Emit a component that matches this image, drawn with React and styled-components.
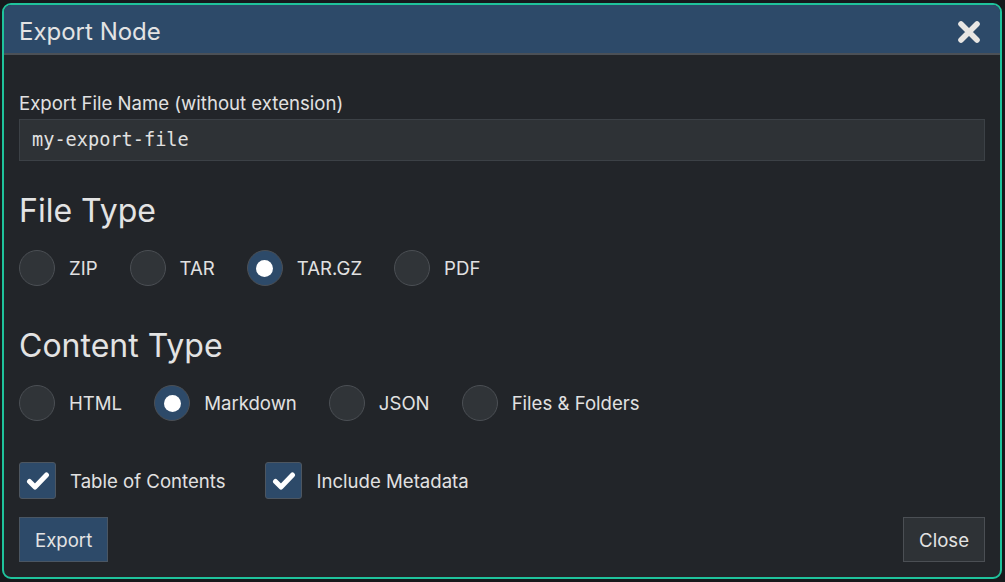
import React, { useState } from "react";
import styled, { createGlobalStyle } from "styled-components";

const GlobalStyle = createGlobalStyle`
  html, body {
    margin: 0;
    padding: 0;
    background: #16191c;
    font-family: Inter, "Noto Sans", sans-serif;
  }
  * { box-sizing: border-box; }
`;

const fileTypes = ["ZIP", "TAR", "TAR.GZ", "PDF"];
const contentTypes = ["HTML", "Markdown", "JSON", "Files & Folders"];

export default function App() {
  const [fileType, setFileType] = useState("TAR.GZ");
  const [contentType, setContentType] = useState("Markdown");
  const [toc, setToc] = useState(true);
  const [meta, setMeta] = useState(true);

  return (
    <>
      <GlobalStyle />
      <Page>
        <Dialog>
          <Header>
            <Title>Export Node</Title>
            <CloseIcon aria-label="close">
              <svg width="24" height="24" viewBox="0 0 24 24">
                <path
                  d="M4 4 L20 20 M20 4 L4 20"
                  stroke="#e8e6e3"
                  strokeWidth="5.6"
                  strokeLinecap="round"
                  fill="none"
                />
              </svg>
            </CloseIcon>
          </Header>
          <Body>
            <Label>Export File Name (without extension)</Label>
            <TextInput defaultValue="my-export-file" spellCheck={false} />

            <Heading>File Type</Heading>
            <OptionRow>
              {fileTypes.map((t) => (
                <Option key={t} onClick={() => setFileType(t)}>
                  <Radio $checked={fileType === t} />
                  <OptionLabel>{t}</OptionLabel>
                </Option>
              ))}
            </OptionRow>

            <Heading $gap={42}>Content Type</Heading>
            <OptionRow>
              {contentTypes.map((t) => (
                <Option key={t} onClick={() => setContentType(t)}>
                  <Radio $checked={contentType === t} />
                  <OptionLabel>{t}</OptionLabel>
                </Option>
              ))}
            </OptionRow>

            <CheckRow>
              <Option onClick={() => setToc(!toc)}>
                <CheckBox $checked={toc}>{toc && <Tick />}</CheckBox>
                <OptionLabel>Table of Contents</OptionLabel>
              </Option>
              <Option onClick={() => setMeta(!meta)}>
                <CheckBox $checked={meta}>{meta && <Tick />}</CheckBox>
                <OptionLabel>Include Metadata</OptionLabel>
              </Option>
            </CheckRow>

            <Footer>
              <Button $primary>Export</Button>
              <Button>Close</Button>
            </Footer>
          </Body>
        </Dialog>
      </Page>
    </>
  );
}

function Tick() {
  return (
    <svg width="24" height="24" viewBox="0 0 24 24">
      <path
        d="M3.5 12.5 L9 18 L20.5 6"
        stroke="#fff"
        strokeWidth="5"
        strokeLinecap="round"
        strokeLinejoin="round"
        fill="none"
      />
    </svg>
  );
}

const Page = styled.div`
  width: 1005px;
  height: 582px;
  padding: 3px 3px 3px 2px;
`;

const Dialog = styled.div`
  width: 1000px;
  height: 576px;
  border: 2px solid #1fc39c;
  border-radius: 9px;
  background: #222529;
  overflow: hidden;
  display: flex;
  flex-direction: column;
`;

const Header = styled.div`
  height: 50px;
  background: #2d4a69;
  border-bottom: 2px solid #4b5056;
  display: flex;
  align-items: center;
  justify-content: space-between;
  padding: 5px 19px 0 15px;
`;

const Title = styled.h1`
  margin: 0;
  font-size: 24px;
  font-weight: 400;
  color: #e3e3e3;
`;

const CloseIcon = styled.div`
  display: flex;
  align-items: center;
  cursor: pointer;
`;

const Body = styled.div`
  flex: 1;
  display: flex;
  flex-direction: column;
  padding: 36px 15px 0 15px;
`;

const Label = styled.div`
  font-size: 18.6px;
  line-height: 25px;
  color: #e1e1e1;
  margin-bottom: 3px;
`;

const TextInput = styled.input`
  height: 42px;
  width: 100%;
  background: #2e3236;
  border: 1px solid #3c4146;
  border-radius: 0;
  color: #e1e1e1;
  font-family: "DejaVu Sans Mono", "Liberation Mono", monospace;
  font-size: 18.6px;
  padding: 0 12px 2px 12px;
  outline: none;
`;

const Heading = styled.h2`
  margin: ${(p) => p.$gap || 32}px 0 0 0;
  font-size: 32px;
  line-height: 36px;
  font-weight: 400;
  color: #e3e3e3;
`;

const OptionRow = styled.div`
  display: flex;
  align-items: center;
  gap: 32px;
  margin-top: 21px;
  height: 36px;
`;

const CheckRow = styled(OptionRow)`
  margin-top: 41px;
  gap: 40px;
  height: 37px;
`;

const Option = styled.label`
  display: flex;
  align-items: center;
  gap: 14px;
  cursor: pointer;
`;

const OptionLabel = styled.span`
  font-size: 18.6px;
  color: #e1e1e1;
`;

const Radio = styled.span`
  width: 36px;
  height: 36px;
  border-radius: 50%;
  background: ${(p) => (p.$checked ? "#2d4a69" : "#303438")};
  border: 1px solid #4b4f54;
  display: flex;
  align-items: center;
  justify-content: center;
  &::after {
    content: "";
    display: ${(p) => (p.$checked ? "block" : "none")};
    width: 17px;
    height: 17px;
    border-radius: 50%;
    background: #fff;
  }
`;

const CheckBox = styled.span`
  width: 37px;
  height: 37px;
  border-radius: 3px;
  background: ${(p) => (p.$checked ? "#2d4a69" : "#303438")};
  border: 1px solid #4d5660;
  display: flex;
  align-items: center;
  justify-content: center;
`;

const Footer = styled.div`
  display: flex;
  justify-content: space-between;
  margin-top: 18px;
`;

const Button = styled.button`
  height: 45px;
  padding: 0 15px;
  font-family: Inter, "Noto Sans", sans-serif;
  font-size: 18.6px;
  color: #e3e3e3;
  background: ${(p) => (p.$primary ? "#2d4a69" : "#2e3236")};
  border: 1px solid ${(p) => (p.$primary ? "#4a5663" : "#4b4f54")};
  border-radius: 0;
  cursor: pointer;
`;
